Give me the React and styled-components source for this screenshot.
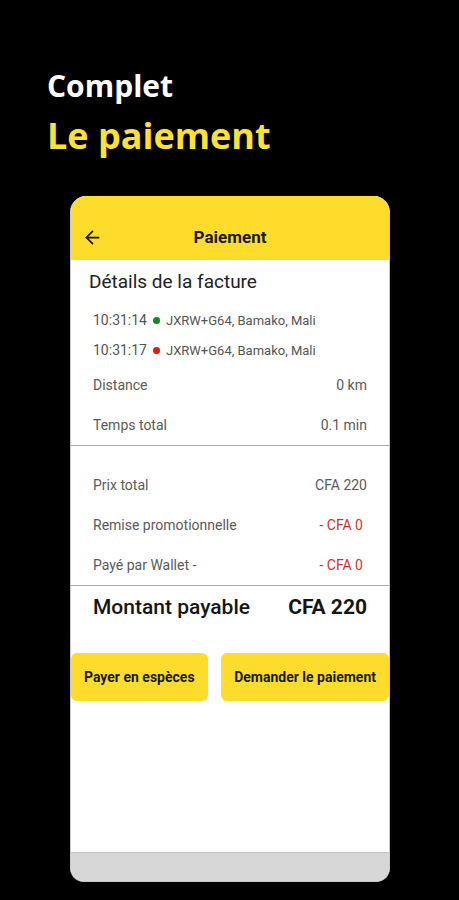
import React from "react"
import styled, { createGlobalStyle } from "styled-components"
import { ArrowLeft } from "lucide-react"

const GlobalStyle = createGlobalStyle`
  html, body {
    margin: 0;
    padding: 0;
    background: #000;
  }
  * {
    box-sizing: border-box;
  }
`

const Page = styled.div`
  width: 459px;
  height: 900px;
  background: #000;
  padding-top: 68px;
  overflow: hidden;
`

const Titles = styled.div`
  padding-left: 47px;
  font-family: "Open Sans", sans-serif;
  font-weight: 700;
`

const Overline = styled.div`
  color: #fff;
  font-size: 30px;
  line-height: 36px;
`

const Headline = styled.div`
  color: #fde135;
  font-size: 36px;
  line-height: 44px;
  margin-top: 10px;
`

const Phone = styled.div`
  margin: 38px 0 0 70px;
  width: 320px;
  height: 686px;
  border-radius: 16px 16px 14px 14px;
  background: #fff;
  border: 1px solid #c8c8c8;
  border-top: none;
  overflow: hidden;
  display: flex;
  flex-direction: column;
  font-family: Roboto, "Liberation Sans", sans-serif;
`

const Header = styled.div`
  height: 64px;
  flex: none;
  background: #fddc2c;
  display: grid;
  grid-template-columns: 40px 1fr 40px;
  align-items: center;
  padding: 18px 0 0 12px;
  margin: 0 -1px;
`

const BackButton = styled.div`
  display: flex;
  align-items: center;
  color: #111;
`

const HeaderTitle = styled.div`
  text-align: center;
  font-size: 17px;
  font-weight: 700;
  color: #1a1a1a;
  padding-right: 12px;
`

const Body = styled.div`
  flex: 1;
  display: flex;
  flex-direction: column;
`

const Section = styled.div`
  padding: ${({ $pad }) => $pad || "0"};
`

const SectionTitle = styled.div`
  font-size: 19px;
  line-height: 24px;
  color: #222;
  padding: 10px 0 0 18px;
  margin-bottom: 11px;
`

const TripRow = styled.div`
  height: 30px;
  display: flex;
  align-items: center;
  padding-left: 22px;
  color: #555;
`

const Time = styled.span`
  font-size: 14px;
  margin-right: 6px;
`

const Dot = styled.span`
  width: 7px;
  height: 7px;
  border-radius: 50%;
  background: ${({ $color }) => $color};
  margin-right: 6px;
`

const Address = styled.span`
  font-size: 13px;
`

const InfoRow = styled.div`
  height: 40px;
  display: flex;
  align-items: center;
  justify-content: space-between;
  padding: 0 22px;
  font-size: 14px;
  color: #5a5a5a;
`

const Value = styled.span`
  color: ${({ $red }) => ($red ? "#c0392b" : "#5a5a5a")};
  margin-right: ${({ $red }) => ($red ? "4px" : "0")};
`

const Divider = styled.div`
  height: 1px;
  background: #a8a8a8;
`

const TotalRow = styled.div`
  height: 42px;
  display: flex;
  align-items: center;
  justify-content: space-between;
  padding: 0 22px;
  font-size: 21px;
  color: #151515;
`

const TotalLabel = styled.span`
  font-weight: 500;
`

const TotalValue = styled.span`
  font-weight: 700;
`

const Actions = styled.div`
  display: flex;
  justify-content: space-between;
  margin-top: 25px;
`

const Button = styled.button`
  height: 48px;
  padding: 0 13px;
  border: none;
  border-radius: 6px;
  background: #fddc2c;
  font-family: Roboto, "Liberation Sans", sans-serif;
  font-size: 14px;
  font-weight: 700;
  color: #1a1a1a;
`

const Footer = styled.div`
  height: 29px;
  flex: none;
  background: #d7d7d7;
  border-top: 1px solid #c4c4c4;
`

const trip = [
  { time: "10:31:14", color: "#14891a", place: "JXRW+G64, Bamako, Mali" },
  { time: "10:31:17", color: "#e51515", place: "JXRW+G64, Bamako, Mali" }
]

export default function App() {
  return (
    <Page>
      <GlobalStyle />
      <Titles>
        <Overline>Complet</Overline>
        <Headline>Le paiement</Headline>
      </Titles>
      <Phone>
        <Header>
          <BackButton>
            <ArrowLeft size={21} strokeWidth={2} />
          </BackButton>
          <HeaderTitle>Paiement</HeaderTitle>
          <span />
        </Header>
        <Body>
          <SectionTitle>Détails de la facture</SectionTitle>
          {trip.map(t => (
            <TripRow key={t.time}>
              <Time>{t.time}</Time>
              <Dot $color={t.color} />
              <Address>{t.place}</Address>
            </TripRow>
          ))}
          <InfoRow>
            <span>Distance</span>
            <Value>0 km</Value>
          </InfoRow>
          <InfoRow>
            <span>Temps total</span>
            <Value>0.1 min</Value>
          </InfoRow>
          <Divider />
          <Section $pad="19px 0 0">
            <InfoRow>
              <span>Prix total</span>
              <Value>CFA 220</Value>
            </InfoRow>
            <InfoRow>
              <span>Remise promotionnelle</span>
              <Value $red>- CFA 0</Value>
            </InfoRow>
            <InfoRow>
              <span>Payé par Wallet -</span>
              <Value $red>- CFA 0</Value>
            </InfoRow>
          </Section>
          <Divider />
          <TotalRow>
            <TotalLabel>Montant payable</TotalLabel>
            <TotalValue>CFA 220</TotalValue>
          </TotalRow>
          <Actions>
            <Button>Payer en espèces</Button>
            <Button>Demander le paiement</Button>
          </Actions>
        </Body>
        <Footer />
      </Phone>
    </Page>
  )
}
